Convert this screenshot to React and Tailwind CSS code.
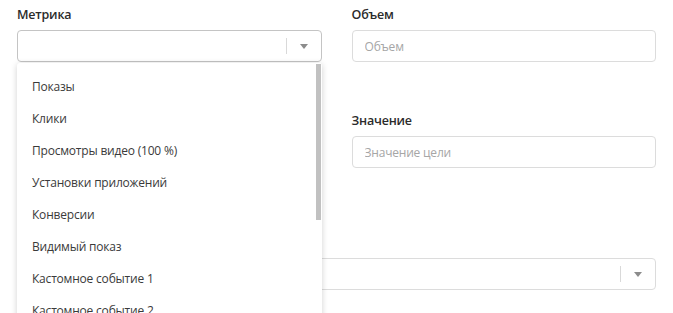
import React from "react";

const metrics = [
    "Показы",
    "Клики",
    "Просмотры видео (100 %)",
    "Установки приложений",
    "Конверсии",
    "Видимый показ",
    "Кастомное событие 1",
    "Кастомное событие 2",
];

function Caret() {
    return (
        <div className="flex items-center">
            <span className="h-[16px] w-px bg-[#d9d9d9]" />
            <svg width="8" height="5" viewBox="0 0 8 5" className="mx-[13px]">
                <path d="M0 0h8L4 5z" fill="#8c8c8c" />
            </svg>
        </div>
    );
}

function Field({ label, children, className = "" }) {
    return (
        <div className={`flex flex-col ${className}`}>
            <label className="mb-[6px] h-[18px] text-[12.5px] leading-[18px] font-semibold tracking-[-0.2px] text-[#2b2b2b]">{label}</label>
            {children}
        </div>
    );
}

function TextInput({ placeholder }) {
    return (
        <input
            type="text"
            placeholder={placeholder}
            className="h-[32px] w-full rounded-[4px] border border-[#dcdcdc] bg-white px-[12px] text-[12px] tracking-[-0.2px] text-[#333] placeholder-[#a6a6a6] outline-none"
        />
    );
}

function SelectBox({ open }) {
    return (
        <div
            className={`flex h-[32px] w-full items-center justify-end rounded-[4px] border bg-white ${open ? "border-[#c4c4c4]" : "border-[#dcdcdc]"}`}
        >
            <Caret />
        </div>
    );
}

export default function App() {
    return (
        <div className="relative h-[313px] w-full overflow-hidden bg-white px-[17px] pt-[6px]" style={{ fontFamily: '"Open Sans", "Noto Sans", sans-serif' }}>
            <div className="grid grid-cols-2 gap-x-[30px]">
                <Field label="Метрика">
                    <div className="relative">
                        <SelectBox open />
                        {/* Dropdown menu */}
                        <div className="absolute top-[33px] left-0 z-10 h-[260px] w-[305px] overflow-hidden rounded-[3px] bg-white py-[8px] shadow-[0_1px_6px_rgba(0,0,0,0.18)]">
                            {metrics.map((m) => (
                                <div key={m} className="flex h-[32px] items-center pl-[15px] text-[12px] tracking-[-0.2px] text-[#3a3a3a]">
                                    {m}
                                </div>
                            ))}
                            <div className="absolute top-[1px] right-[1px] h-[156px] w-[5px] bg-[#c1c1c1]" />
                        </div>
                    </div>
                </Field>
                <Field label="Объем">
                    <TextInput placeholder="Объем" />
                </Field>

                {/* hidden under the dropdown */}
                <Field label="" className="mt-[50px]">
                    <TextInput placeholder="" />
                </Field>
                <Field label="Значение" className="mt-[50px]">
                    <TextInput placeholder="Значение цели" />
                </Field>
            </div>

            <Field label="" className="mt-[66px]">
                <SelectBox />
            </Field>
        </div>
    );
}
